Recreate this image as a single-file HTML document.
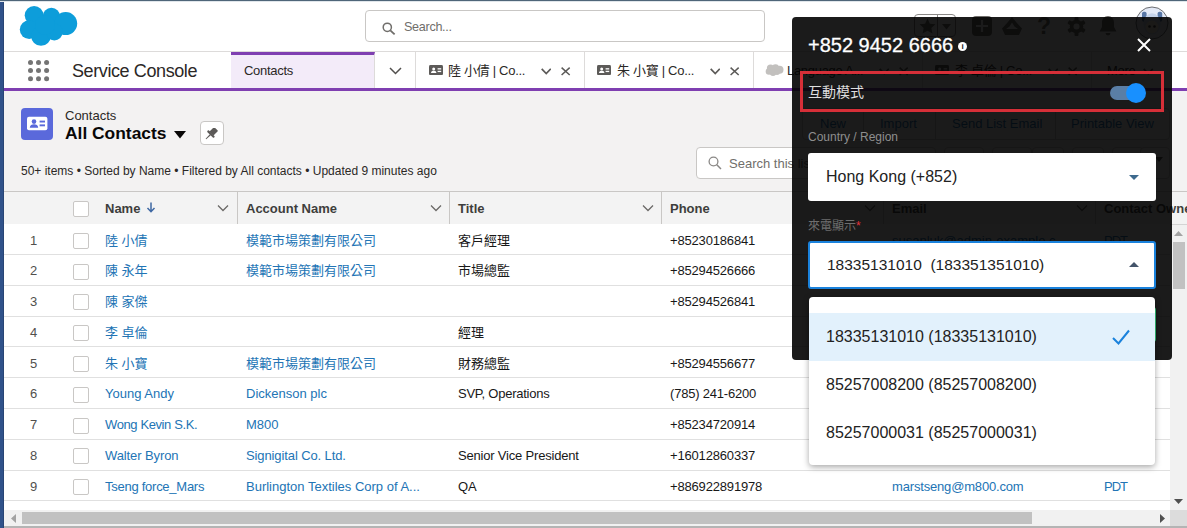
<!DOCTYPE html>
<html lang="zh-Hant">
<head>
<meta charset="utf-8">
<title>Contacts | Salesforce</title>
<style>
*{box-sizing:border-box;margin:0;padding:0}
html,body{width:1187px;height:528px;overflow:hidden;background:#fff}
body{line-height:16px;font-family:"Liberation Sans","Noto Sans CJK TC",sans-serif;font-size:13px;color:#181818;position:relative}
.abs{position:absolute}
#frameL{left:0;top:0;width:4px;height:528px;background:linear-gradient(90deg,#30528a 0,#30528a 75%,#21385f 100%)}
#frameT{left:0;top:0;width:1187px;height:2px;background:linear-gradient(#4f6679 0,#4f6679 45%,#d5dde3 55%,#eef1f4 100%)}
#hdr{left:4px;top:2px;width:1183px;height:50px;background:#fff;border-bottom:1px solid #dddbda}
#search{left:365px;top:10px;width:400px;height:32px;border:1px solid #c9c7c5;border-radius:4px;background:#fff}
#search span{position:absolute;left:38px;top:8.3px;font-size:12.6px;letter-spacing:-.3px;color:#706e6b}
#starbox{left:914px;top:14px;width:42px;height:23px;border:1px solid #8a8886;border-radius:4px;background:#fff}
#starbox i{position:absolute;left:22px;top:0;width:1px;height:21px;background:#8a8886}
#nav{left:4px;top:52px;width:1183px;height:39px;background:#fff;border-bottom:3px solid #7f3fb1}
#appname{left:72px;top:60px;font-size:18px;line-height:22px;letter-spacing:-.4px;color:#2b2826;white-space:nowrap}
.tab{position:absolute;top:52px;height:36px;border-right:1px solid #dddbda;font-size:13px;color:#2b2826;white-space:nowrap}
.tab .t{position:absolute;top:11px;letter-spacing:-.3px}
#tab0{left:231px;width:144px;background:#f3ebf9;border-top:3px solid #7f3fb1}
.ci{position:absolute;top:13px;width:15px;height:10px;border-radius:2px;background:#514f4d}
.ci:before{content:"";position:absolute;left:3px;top:3px;width:4px;height:4px;background:#fff;border-radius:2px 2px 0 0}
.ci:after{content:"";position:absolute;left:9px;top:3px;width:4px;height:1.5px;background:#fff;box-shadow:0 2.5px 0 #fff}
.cv{position:absolute;top:14.2px;width:7.5px;height:7.5px;border-right:1.8px solid #5c5a58;border-bottom:1.8px solid #5c5a58;transform:rotate(45deg)}
.ic{position:absolute}
.cx{position:absolute;top:15px;width:9.3px;height:8.6px}
.cx:before,.cx:after{content:"";position:absolute;left:3.85px;top:-2px;width:1.6px;height:12.6px;background:#5c5a58;transform:rotate(47deg)}
.cx:after{transform:rotate(-47deg)}
#content{left:4px;top:91px;width:1183px;height:437px;background:#f3f2f2}
#objicon{left:21px;top:108px;width:32px;height:32px;border-radius:4px;background:#5a69db}
#lbl{left:65px;top:108px;font-size:13px;line-height:16px;color:#2b2826}
#ttl{left:65px;top:123px;font-size:17.4px;line-height:20px;font-weight:bold;color:#080707;white-space:nowrap}
#pin{left:200px;top:121px;width:24px;height:24px;border:1px solid #c9c7c5;border-radius:4px;background:#fff}
#meta{left:21px;top:163px;font-size:12px;color:#2b2826;white-space:nowrap}
#lsearch{left:696px;top:147px;width:240px;height:32px;border:1px solid #c9c7c5;border-radius:4px;background:#fff}
#lsearch span{position:absolute;left:32px;top:8px;font-size:13px;color:#706e6b;white-space:nowrap}
#btns{left:802px;top:108px;width:368px;height:32px;border:1px solid #c9c7c5;border-radius:4px;background:#fff;font-size:13px;color:#1b75b9;white-space:nowrap}
#btns span{position:absolute;top:7px;line-height:16px}
#btns i{position:absolute;top:0;width:1px;height:30px;background:#c9c7c5}
.ib{position:absolute;top:147px;width:40px;height:32px;border:1px solid #c9c7c5;border-radius:4px;background:#fff}
#thead{left:4px;top:190.6px;width:1183px;height:34.2px;background:#f3f3f3;border-top:1px solid #c9c7c5;border-bottom:1px solid #d4d4d4}
.th{position:absolute;top:201px;font-size:13px;font-weight:bold;color:#3e3e3c;white-space:nowrap}
.sep{position:absolute;top:192px;width:1px;height:32px;background:#c9c7c5}
.row{position:absolute;left:4px;width:1166px;height:31px;background:#fff}
.ln{position:absolute;left:4px;width:1166px;height:1px;background:#e0e0e0}
.row span{position:absolute;top:8.3px;white-space:nowrap;font-size:13px;line-height:16px}
.n{left:26px;color:#514f4d}
.a{color:#2274b5}
.c1{left:101px}.c2{left:242px}.c3{left:454px;color:#181818}.c4{left:666px;color:#181818;letter-spacing:-.17px}.c5{left:888px}.c6{left:1100px;letter-spacing:-1px}
.cb{position:absolute;left:69.3px;top:8.6px;width:16px;height:16px;border:1px solid #c9c7c5;border-radius:2px;background:#fff}
#vscroll{left:1170px;top:225px;width:17px;height:285px;background:#f1f1f1}
#hscroll{left:4px;top:510px;width:1166px;height:16px;background:#f1f1f1}
#panel{left:792px;top:17px;width:380px;height:343px;border-radius:4px;background:rgba(2,2,2,.9)}
#ptitle{left:808px;top:33px;font-size:20px;line-height:24px;color:#fff;white-space:nowrap;-webkit-text-stroke:.3px #fff}
#pinfo{left:958px;top:42px;width:9px;height:9px;border-radius:50%;background:#fff;color:#181818;font-size:8px;line-height:9px;text-align:center;font-weight:bold}
#redbox{left:800px;top:71px;width:363.5px;height:41px;border:3px solid #d62f38}
#mode{left:808px;top:83px;font-size:14px;line-height:18px;color:#dedede;white-space:nowrap}
#track{left:1109.5px;top:86px;width:35px;height:14px;border-radius:7px;background:#5a7ea6}
#thumb{left:1126px;top:83px;width:20px;height:20px;border-radius:50%;background:#1890ff}
#clbl{left:808px;top:129px;font-size:12px;line-height:16px;color:#8e8e8e;white-space:nowrap}
#sel1{left:808px;top:153.3px;width:348px;height:47.4px;border-radius:3px;background:#fff}
#sel1 span,#sel2 span{position:absolute;left:18px;top:14px;font-size:16px;line-height:20px;color:#222;white-space:nowrap}
#rlbl{left:808px;top:217.6px;font-size:12px;line-height:16px;color:#6e6e6e;white-space:nowrap}
#sel2{left:808px;top:241.4px;width:348px;height:47.2px;border-radius:3px;background:#fff;border:2px solid #1a82dc}
#sel2 span{left:17px;top:12px;font-size:15.5px}
#dd{left:809px;top:297px;width:346.300px;height:167.800px;border-radius:4px;background:#fff;box-shadow:0 2px 6px rgba(0,0,0,.35)}
#dd .it{position:absolute;left:0;width:346px;height:48px;font-size:16px;line-height:20px;color:#222;white-space:nowrap}
#dd .it span{position:absolute;left:17px;top:14px}
</style>
</head>
<body>
<div id="hdr" class="abs"></div>
<svg class="abs" style="left:18px;top:4px" width="62" height="44" viewBox="18 4 62 44"><g fill="#0d9dda"><circle cx="34.1" cy="15.3" r="9.4"/><circle cx="51.4" cy="16.7" r="8.9"/><circle cx="65.7" cy="23.6" r="11.5"/><circle cx="29.2" cy="29.6" r="9.4"/><circle cx="41" cy="36" r="9.85"/><circle cx="54.3" cy="32" r="8.4"/><circle cx="45" cy="25" r="10"/></g></svg>
<div id="search" class="abs"><span>Search...</span></div>
<svg class="abs" style="left:382px;top:21.500px" width="14" height="14" viewBox="0 0 14 14"><circle cx="5.300" cy="5.300" r="4.100" fill="none" stroke="#706e6b" stroke-width="1.500"/><path d="M8.300 8.300l4.300 4.100" stroke="#706e6b" stroke-width="1.800"/></svg>
<div id="starbox" class="abs"><i></i></div>
<svg class="abs" style="left:919px;top:18px" width="17" height="16" viewBox="0 0 17 16"><path d="M8.5 0.5l2.4 5.2 5.6.6-4.2 3.8 1.2 5.5-5-2.9-5 2.9 1.2-5.5L.5 6.3l5.6-.6z" fill="#706e6b"/></svg>
<svg class="abs" style="left:942px;top:24px" width="9" height="6" viewBox="0 0 9 6"><path d="M0 0h9L4.500 5.500z" fill="#706e6b"/></svg>
<svg class="abs" style="left:972px;top:16px" width="20" height="20" viewBox="0 0 20 20"><rect width="20" height="20" rx="4" fill="#706e6b"/><path d="M10 4v12M4 10h12" stroke="#fff" stroke-width="2.2"/></svg>
<svg class="abs" style="left:1002px;top:17px" width="20" height="18" viewBox="0 0 20 18"><path d="M10 0l4.500 5.500 5.500 6-3 6.500H3L0 11.500l5.500-6z" fill="#706e6b"/><path d="M10 5.500l2.500 4 3.500 2.500H4l3.500-2.500z" fill="#fff"/></svg>
<div class="abs" style="left:1037px;top:13px;font-size:23px;line-height:26px;font-weight:bold;color:#706e6b">?</div>
<svg class="abs" style="left:1067px;top:17px" width="19" height="19" viewBox="0 0 19 19"><g fill="#706e6b"><circle cx="9.5" cy="9.5" r="6.800"/><g id="tth"><rect x="7.500" y="0" width="4" height="19" rx="1"/></g><rect x="7.500" y="0" width="4" height="19" rx="1" transform="rotate(60 9.500 9.500)"/><rect x="7.500" y="0" width="4" height="19" rx="1" transform="rotate(120 9.500 9.500)"/></g><circle cx="9.500" cy="9.500" r="3" fill="#fff"/></svg>
<svg class="abs" style="left:1099px;top:16px" width="18" height="20" viewBox="0 0 18 20"><path d="M9 0c-3.800 0-6 3-6 6.500v4.500L.500 15.500h17L15 11V6.500C15 3 12.800 0 9 0z" fill="#706e6b"/><path d="M6.500 17h5a2.500 2.500 0 0 1-5 0z" fill="#706e6b"/></svg>
<svg class="abs" style="left:1135px;top:6px" width="34" height="34" viewBox="0 0 34 34"><defs><clipPath id="avc"><circle cx="17" cy="17" r="15.500"/></clipPath></defs><circle cx="17" cy="17" r="16" fill="#e3e9f6" stroke="#6b6d70" stroke-width="1"/><g clip-path="url(#avc)"><rect x="7" y="5.800" width="4.600" height="10" rx="1.800" fill="#5877a6"/><rect x="22.600" y="5.800" width="4.600" height="10" rx="1.800" fill="#5877a6"/><ellipse cx="17" cy="17.800" rx="8.500" ry="10.500" fill="#c5d3ea"/><ellipse cx="17" cy="21" rx="6.500" ry="6.500" fill="#f4e6d8"/><circle cx="14.500" cy="20.500" r="1.300" fill="#333"/><circle cx="19.500" cy="20.500" r="1.300" fill="#333"/></g></svg>
<div id="nav" class="abs"></div>
<svg class="abs" style="left:27px;top:59px" width="23" height="23" viewBox="27 59 23 23"><g fill="#747474"><circle cx="30.5" cy="62.4" r="2.5"/><circle cx="38.5" cy="62.4" r="2.5"/><circle cx="46.6" cy="62.4" r="2.5"/><circle cx="30.5" cy="70.5" r="2.5"/><circle cx="38.5" cy="70.5" r="2.5"/><circle cx="46.6" cy="70.5" r="2.5"/><circle cx="30.5" cy="78.7" r="2.5"/><circle cx="38.5" cy="78.7" r="2.5"/><circle cx="46.6" cy="78.7" r="2.5"/></g></svg>
<div id="appname" class="abs">Service Console</div>
<div id="tab0" class="tab"><span class="t" style="left:13px;top:8px">Contacts</span></div>
<svg class="abs" style="left:389px;top:67px" width="13" height="8" viewBox="0 0 13 8"><path d="M1 1l5.5 5.5L12 1" fill="none" stroke="#514f4d" stroke-width="1.5"/></svg>
<div class="tab" style="left:375px;width:41px"></div>
<div class="tab" style="left:416px;width:169px"><svg class="ic" style="left:13.0px;top:13.200px" width="14" height="10.200" viewBox="0 0 14 10.200"><rect width="14" height="10.200" rx="1.500" fill="#5c5a58"/><circle cx="4.700" cy="3.900" r="1.500" fill="#fff"/><path d="M2 8.100c0-1.800 1.200-2.400 2.700-2.400s2.700.600 2.700 2.400z" fill="#fff"/><rect x="8.600" y="3.200" width="3.600" height="1.300" fill="#fff"/><rect x="8.600" y="5.800" width="3.600" height="1.300" fill="#fff"/></svg><span class="t" style="left:32px">陸 小倩 | Co...</span><svg class="ic" style="left:124.6px;top:16.200px" width="10.500" height="7" viewBox="0 0 10.500 7"><path d="M.700 .800l4.550 4.700L9.800 .800" fill="none" stroke="#5c5a58" stroke-width="1.700"/></svg><svg class="ic" style="left:145.3px;top:15px" width="9.300" height="8.600" viewBox="0 0 9.300 8.600"><path d="M.600 .600l8.100 7.400M8.700 .600L.600 8" fill="none" stroke="#5c5a58" stroke-width="1.500"/></svg></div>
<div class="tab" style="left:585px;width:169px"><svg class="ic" style="left:12.0px;top:13.200px" width="14" height="10.200" viewBox="0 0 14 10.200"><rect width="14" height="10.200" rx="1.500" fill="#5c5a58"/><circle cx="4.700" cy="3.900" r="1.500" fill="#fff"/><path d="M2 8.100c0-1.800 1.200-2.400 2.700-2.400s2.700.600 2.700 2.400z" fill="#fff"/><rect x="8.600" y="3.200" width="3.600" height="1.300" fill="#fff"/><rect x="8.600" y="5.800" width="3.600" height="1.300" fill="#fff"/></svg><span class="t" style="left:32px">朱 小寶 | Co...</span><svg class="ic" style="left:124.6px;top:16.200px" width="10.500" height="7" viewBox="0 0 10.500 7"><path d="M.700 .800l4.550 4.700L9.800 .800" fill="none" stroke="#5c5a58" stroke-width="1.700"/></svg><svg class="ic" style="left:145.3px;top:15px" width="9.300" height="8.600" viewBox="0 0 9.300 8.600"><path d="M.600 .600l8.100 7.400M8.700 .600L.600 8" fill="none" stroke="#5c5a58" stroke-width="1.500"/></svg></div>
<div class="tab" style="left:754px;width:169px"><svg style="position:absolute;left:11px;top:11px" width="19" height="13" viewBox="0 0 19 13"><g fill="#c2c0be"><circle cx="5.5" cy="5" r="3.6"/><circle cx="10.5" cy="4.6" r="3.4"/><circle cx="14.5" cy="6.8" r="4"/><circle cx="4" cy="8.5" r="3.3"/><circle cx="8" cy="9.5" r="3.4"/><circle cx="12" cy="9" r="3"/></g></svg><span class="t" style="left:33px">Language A...</span><svg class="ic" style="left:124.6px;top:16.200px" width="10.500" height="7" viewBox="0 0 10.500 7"><path d="M.700 .800l4.550 4.700L9.800 .800" fill="none" stroke="#5c5a58" stroke-width="1.700"/></svg><svg class="ic" style="left:145.3px;top:15px" width="9.300" height="8.600" viewBox="0 0 9.300 8.600"><path d="M.600 .600l8.100 7.400M8.700 .600L.600 8" fill="none" stroke="#5c5a58" stroke-width="1.500"/></svg></div>
<div class="tab" style="left:923px;width:169px"><svg class="ic" style="left:12.0px;top:13.200px" width="14" height="10.200" viewBox="0 0 14 10.200"><rect width="14" height="10.200" rx="1.500" fill="#5c5a58"/><circle cx="4.700" cy="3.900" r="1.500" fill="#fff"/><path d="M2 8.100c0-1.800 1.200-2.400 2.700-2.400s2.700.600 2.700 2.400z" fill="#fff"/><rect x="8.600" y="3.200" width="3.600" height="1.300" fill="#fff"/><rect x="8.600" y="5.800" width="3.600" height="1.300" fill="#fff"/></svg><span class="t" style="left:32px">李 卓倫 | Co...</span><svg class="ic" style="left:124.6px;top:16.200px" width="10.500" height="7" viewBox="0 0 10.500 7"><path d="M.700 .800l4.550 4.700L9.800 .800" fill="none" stroke="#5c5a58" stroke-width="1.700"/></svg><svg class="ic" style="left:145.3px;top:15px" width="9.300" height="8.600" viewBox="0 0 9.300 8.600"><path d="M.600 .600l8.100 7.400M8.700 .600L.600 8" fill="none" stroke="#5c5a58" stroke-width="1.500"/></svg></div>
<div class="tab" style="left:1092px;width:95px;border-right:0"><span class="t" style="left:15px">More</span><svg class="ic" style="left:51.0px;top:16.200px" width="10.500" height="7" viewBox="0 0 10.500 7"><path d="M.700 .800l4.550 4.700L9.800 .800" fill="none" stroke="#5c5a58" stroke-width="1.700"/></svg></div>
<div id="content" class="abs"></div>
<div id="objicon" class="abs"></div>
<svg class="abs" style="left:27px;top:116px" width="21" height="15" viewBox="0 0 21 15"><rect x="0" y="0.8" width="20.4" height="13.5" rx="2" fill="#fff"/><circle cx="7" cy="5.6" r="2.3" fill="#5a69db"/><path d="M2.8 11.8c0-2.6 2-3.6 4.2-3.6s4.2 1 4.2 3.6z" fill="#5a69db"/><rect x="12.6" y="4.6" width="5.4" height="1.9" fill="#5a69db"/><rect x="12.6" y="8.4" width="5.4" height="1.9" fill="#5a69db"/></svg>
<div id="lbl" class="abs">Contacts</div>
<div id="ttl" class="abs">All Contacts</div>
<svg class="abs" style="left:174px;top:131px" width="12" height="8" viewBox="0 0 12 8"><path d="M0 0h12L6 7.6z" fill="#080707"/></svg>
<div id="pin" class="abs"></div>
<svg class="abs" style="left:202px;top:127.5px" width="16" height="15" viewBox="0 0 16 15"><g transform="rotate(45 9 6)" fill="#5c5a58"><rect x="6.2" y="-1.2" width="5.6" height="6.6" rx=".8"/><rect x="4.3" y="5" width="9.4" height="2.2" rx=".9"/><path d="M8.3 7h1.4l-.3 6.2h-.8z"/></g></svg>
<div id="meta" class="abs">50+ items • Sorted by Name • Filtered by All contacts • Updated 9 minutes ago</div>
<div id="lsearch" class="abs"><span>Search this list...</span></div>
<svg class="abs" style="left:708px;top:156px" width="14" height="14" viewBox="0 0 14 14"><circle cx="5.5" cy="5.5" r="4.4" fill="none" stroke="#8a8886" stroke-width="1.3"/><path d="M8.8 8.8l4.2 4.2" stroke="#8a8886" stroke-width="1.5"/></svg>
<div id="btns" class="abs"><span style="left:17px">New</span><i style="left:60px"></i><span style="left:77px">Import</span><i style="left:132px"></i><span style="left:149px">Send List Email</span><i style="left:252px"></i><span style="left:268px">Printable View</span></div>
<div class="ib" style="left:944px"></div><div class="ib" style="left:992px"></div><div class="ib" style="left:1032px;width:32px"></div><div class="ib" style="left:1072px;width:32px"></div><div class="ib" style="left:1112px;width:32px"></div><div class="ib" style="left:1140px;width:30px"></div>
<svg class="abs" style="left:1154.500px;top:156.500px" width="8" height="5" viewBox="0 0 8 5"><path d="M0 0h8L4 5z" fill="#514f4d"/></svg>
<div id="thead" class="abs"></div>
<i class="cb" style="left:73px;top:201px"></i>
<div class="th" style="left:105px">Name</div>
<svg class="abs" style="left:146px;top:202px" width="10" height="11" viewBox="0 0 10 11"><path d="M5 0.500v9M1.500 6l3.500 3.700L8.500 6" fill="none" stroke="#3f68a3" stroke-width="1.500"/></svg>
<div class="th" style="left:246px">Account Name</div>
<div class="th" style="left:458px">Title</div>
<div class="th" style="left:670px">Phone</div>
<div class="th" style="left:892px">Email</div>
<div class="th" style="left:1104px">Contact Owner</div>
<i class="sep" style="left:237px"></i><i class="sep" style="left:449px"></i><i class="sep" style="left:661px"></i><i class="sep" style="left:883px"></i><i class="sep" style="left:1095px"></i>
<svg class="abs chev" style="left:217px;top:204px" width="12" height="8" viewBox="0 0 12 8"><path d="M1 1.5l5 5 5-5" fill="none" stroke="#6b6967" stroke-width="1.3"/></svg>
<svg class="abs chev" style="left:430px;top:204px" width="12" height="8" viewBox="0 0 12 8"><path d="M1 1.5l5 5 5-5" fill="none" stroke="#6b6967" stroke-width="1.3"/></svg>
<svg class="abs chev" style="left:642px;top:204px" width="12" height="8" viewBox="0 0 12 8"><path d="M1 1.5l5 5 5-5" fill="none" stroke="#6b6967" stroke-width="1.3"/></svg>
<svg class="abs chev" style="left:864px;top:204px" width="12" height="8" viewBox="0 0 12 8"><path d="M1 1.5l5 5 5-5" fill="none" stroke="#6b6967" stroke-width="1.3"/></svg>
<svg class="abs chev" style="left:1076px;top:204px" width="12" height="8" viewBox="0 0 12 8"><path d="M1 1.5l5 5 5-5" fill="none" stroke="#6b6967" stroke-width="1.3"/></svg>
<div id="rows">
<div class="row" style="top:224.33px;height:30.77px"><span class="n">1</span><i class="cb"></i><span class="a c1">陸 小倩</span><span class="a c2">模範市場策劃有限公司</span><span class="c3">客戶經理</span><span class="c4">+85230186841</span><span class="a c5">susanluk@admin-example.c...</span><span class="a c6">PDT</span></div>
<div class="row" style="top:255.10px;height:30.77px"><span class="n">2</span><i class="cb"></i><span class="a c1">陳 永年</span><span class="a c2">模範市場策劃有限公司</span><span class="c3">市場總監</span><span class="c4">+85294526666</span><span class="a c6">PDT</span></div>
<div class="row" style="top:285.87px;height:30.77px"><span class="n">3</span><i class="cb"></i><span class="a c1">陳 家傑</span><span class="c4">+85294526841</span><span class="a c6">PDT</span></div>
<div class="row" style="top:316.64px;height:30.77px"><span class="n">4</span><i class="cb"></i><span class="a c1">李 卓倫</span><span class="c3">經理</span><span class="a c6">PDT</span></div>
<div class="row" style="top:347.41px;height:30.77px"><span class="n">5</span><i class="cb"></i><span class="a c1">朱 小寶</span><span class="a c2">模範市場策劃有限公司</span><span class="c3">財務總監</span><span class="c4">+85294556677</span><span class="a c6">PDT</span></div>
<div class="row" style="top:378.18px;height:30.77px"><span class="n">6</span><i class="cb"></i><span class="a c1">Young Andy</span><span class="a c2">Dickenson plc</span><span class="c3" style="letter-spacing:-0.25px">SVP, Operations</span><span class="c4" style="letter-spacing:-0.2px">(785) 241-6200</span><span class="a c6">PDT</span></div>
<div class="row" style="top:408.95px;height:30.77px"><span class="n">7</span><i class="cb"></i><span class="a c1" style="letter-spacing:-0.39px">Wong Kevin S.K.</span><span class="a c2">M800</span><span class="c4">+85234720914</span><span class="a c6">PDT</span></div>
<div class="row" style="top:439.72px;height:30.77px"><span class="n">8</span><i class="cb"></i><span class="a c1" style="letter-spacing:-0.1px">Walter Byron</span><span class="a c2" style="letter-spacing:-0.11px">Signigital Co. Ltd.</span><span class="c3" style="letter-spacing:-0.19px">Senior Vice President</span><span class="c4">+16012860337</span><span class="a c6">PDT</span></div>
<div class="row" style="top:470.49px;height:30.77px"><span class="n">9</span><i class="cb"></i><span class="a c1" style="letter-spacing:-0.26px">Tseng force_Mars</span><span class="a c2">Burlington Textiles Corp of A...</span><span class="c3">QA</span><span class="c4">+886922891978</span><span class="a c5" style="letter-spacing:-0.17px">marstseng@m800.com</span><span class="a c6">PDT</span></div>
<div class="row" style="top:501px;height:9px"></div>
<i class="ln" style="top:254px"></i><i class="ln" style="top:285px"></i><i class="ln" style="top:316px"></i><i class="ln" style="top:346px"></i><i class="ln" style="top:377px"></i><i class="ln" style="top:408px"></i><i class="ln" style="top:439px"></i><i class="ln" style="top:470px"></i><i class="ln" style="top:500px"></i>
</div>
<div id="vscroll" class="abs"></div>
<div class="abs" style="left:1173px;top:241.500px;width:11.500px;height:47px;background:#c1c1c1"></div>
<svg class="abs" style="left:1174px;top:231px" width="9" height="5" viewBox="0 0 9 5"><path d="M0 5h9L4.500 0z" fill="#a3a3a3"/></svg>
<svg class="abs" style="left:1174px;top:499px" width="9" height="5" viewBox="0 0 9 5"><path d="M0 0h9L4.500 5z" fill="#505050"/></svg>
<div id="hscroll" class="abs"></div>
<div class="abs" style="left:22px;top:512px;width:1010px;height:12px;background:#c1c1c1"></div>
<svg class="abs" style="left:11px;top:514px" width="5" height="9" viewBox="0 0 5 9"><path d="M5 0v9L0 4.500z" fill="#a3a3a3"/></svg>
<svg class="abs" style="left:1160px;top:514px" width="5" height="9" viewBox="0 0 5 9"><path d="M0 0v9L5 4.500z" fill="#505050"/></svg>
<div class="abs" style="left:1170px;top:510px;width:17px;height:16px;background:#dcdcdc"></div>
<div class="abs" style="left:4px;top:526px;width:1183px;height:2px;background:#b4b4b4"></div>
<div id="panel" class="abs"></div>
<div id="ptitle" class="abs">+852 9452 6666</div>
<div id="pinfo" class="abs">i</div>
<svg class="abs" style="left:1137px;top:38px" width="14" height="14" viewBox="0 0 14 14"><path d="M1 1l12 12M13 1L1 13" stroke="#fff" stroke-width="2" fill="none"/></svg>
<div id="redbox" class="abs"></div>
<div id="mode" class="abs">互動模式</div>
<div id="track" class="abs"></div>
<div id="thumb" class="abs"></div>
<div id="clbl" class="abs">Country / Region</div>
<div id="sel1" class="abs"><span>Hong Kong (+852)</span></div>
<svg class="abs" style="left:1129px;top:175px" width="10" height="5" viewBox="0 0 10 5"><path d="M0 0h10L5 5z" fill="#3d6a8e"/></svg>
<div id="rlbl" class="abs">來電顯示<span style="color:#e0333a">*</span></div>
<div id="sel2" class="abs"><span>18335131010&nbsp; (183351351010)</span></div>
<svg class="abs" style="left:1129px;top:262px" width="10" height="5" viewBox="0 0 10 5"><path d="M0 5h10L5 0z" fill="#44546a"/></svg>
<div class="abs" style="left:810px;top:307px;width:346.300px;height:35px;border-radius:3px;background:#35c67a"></div>
<div id="dd" class="abs">
<div class="it" style="top:16px;background:#e2f1fc"><span>18335131010 (18335131010)</span></div>
<div class="it" style="top:64px"><span>85257008200 (85257008200)</span></div>
<div class="it" style="top:112px"><span>85257000031 (85257000031)</span></div>
<svg style="position:absolute;left:303px;top:32px" width="18" height="16" viewBox="0 0 18 16"><path d="M1 9l5.5 5.5L17 1.5" fill="none" stroke="#1a82dc" stroke-width="2"/></svg>
</div>
<div id="frameL" class="abs"></div>
<div id="frameT" class="abs"></div>
</body>
</html>
